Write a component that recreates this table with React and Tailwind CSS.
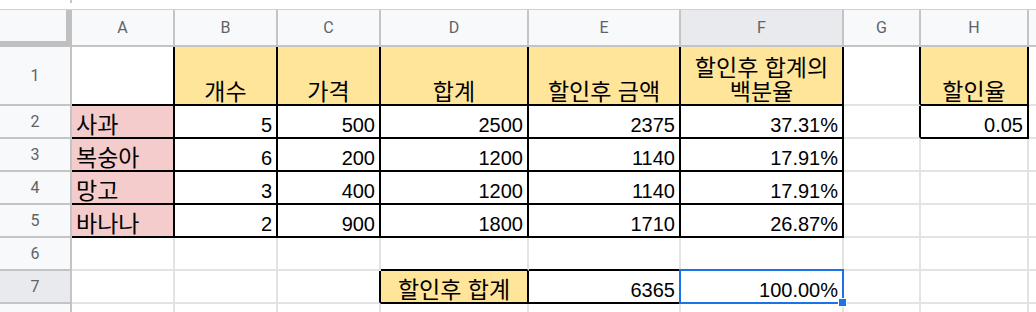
import React from 'react';
import clsx from 'clsx';

const Y = 'bg-[#ffe599]';
const P = 'bg-[#f4cccc]';

const LETTERS = ['A', 'B', 'C', 'D', 'E', 'F', 'G', 'H', ''];

// Hangul renders a touch larger than the digits in the sheet
const K = ({ children }) => <span className="text-[23px] leading-[23px]">{children}</span>;

// one entry per cell A..I; r / b = black right / bottom edge
const ROWS = [
  [
    { r: 1, b: 1 },
    { t: <K>개수</K>, a: 'c', bg: Y, r: 1, b: 1 },
    { t: <K>가격</K>, a: 'c', bg: Y, r: 1, b: 1 },
    { t: <K>합계</K>, a: 'c', bg: Y, r: 1, b: 1 },
    { t: <K>할인후 금액</K>, a: 'c', bg: Y, r: 1, b: 1 },
    { t: (<div className="text-center text-[23px] leading-[24px]">할인후 합계의<br />백분율</div>), a: 'c', bg: Y, r: 1, b: 1 },
    { r: 1 },
    { t: <K>할인율</K>, a: 'c', bg: Y, r: 1, b: 1 },
    {},
  ],
  [
    { t: <K>사과</K>, a: 'l', bg: P, r: 1, b: 1 },
    { t: '5', a: 'r', r: 1, b: 1 },
    { t: '500', a: 'r', r: 1, b: 1 },
    { t: '2500', a: 'r', r: 1, b: 1 },
    { t: '2375', a: 'r', r: 1, b: 1 },
    { t: '37.31%', a: 'r', r: 1, b: 1 },
    { r: 1 },
    { t: '0.05', a: 'r', r: 1, b: 1 },
    {},
  ],
  [
    { t: <K>복숭아</K>, a: 'l', bg: P, r: 1, b: 1 },
    { t: '6', a: 'r', r: 1, b: 1 },
    { t: '200', a: 'r', r: 1, b: 1 },
    { t: '1200', a: 'r', r: 1, b: 1 },
    { t: '1140', a: 'r', r: 1, b: 1 },
    { t: '17.91%', a: 'r', r: 1, b: 1 },
    {},
    {},
    {},
  ],
  [
    { t: <K>망고</K>, a: 'l', bg: P, r: 1, b: 1 },
    { t: '3', a: 'r', r: 1, b: 1 },
    { t: '400', a: 'r', r: 1, b: 1 },
    { t: '1200', a: 'r', r: 1, b: 1 },
    { t: '1140', a: 'r', r: 1, b: 1 },
    { t: '17.91%', a: 'r', r: 1, b: 1 },
    {},
    {},
    {},
  ],
  [
    { t: <K>바나나</K>, a: 'l', bg: P, r: 1, b: 1 },
    { t: '2', a: 'r', r: 1, b: 1 },
    { t: '900', a: 'r', r: 1, b: 1 },
    { t: '1800', a: 'r', r: 1, b: 1 },
    { t: '1710', a: 'r', r: 1, b: 1 },
    { t: '26.87%', a: 'r', r: 1, b: 1 },
    {},
    {},
    {},
  ],
  [{}, {}, {}, { b: 1 }, { b: 1 }, { b: 1 }, {}, {}, {}],
  [
    {},
    {},
    { r: 1 },
    { t: <K>할인후 합계</K>, a: 'c', bg: Y, r: 1, b: 1 },
    { t: '6365', a: 'r', r: 1, b: 1 },
    { t: '100.00%', a: 'r', r: 1, b: 1, sel: 1 },
    {},
    {},
    {},
  ],
  [{}, {}, {}, {}, {}, {}, {}, {}, {}],
];

function Cell({ t, a, bg, r, b, sel }) {
  return (
    <div
      className={clsx(
        'relative flex items-end border-r-2 border-b-2 whitespace-nowrap text-[20px] leading-[23px] text-black',
        a === 'r' && 'justify-end pr-[4px]',
        a === 'l' && 'justify-start pl-[4px]',
        a === 'c' && 'justify-center',
        bg || 'bg-white',
        r ? 'border-r-black' : 'border-r-[#e2e3e3]',
        b ? 'border-b-black' : 'border-b-[#e2e3e3]'
      )}
    >
      {t}
      {sel ? (
        <>
          <div className="absolute -left-[2px] -top-[2px] -right-[2px] -bottom-[2px] z-10 border-2 border-[#1a73e8]" />
          <div className="absolute -right-[5px] -bottom-[5px] z-20 w-[9px] h-[9px] bg-[#1a73e8] border border-white" />
        </>
      ) : null}
    </div>
  );
}

export default function App() {
  return (
    <div
      className="w-[1036px] h-[312px] overflow-hidden bg-white"
      style={{ fontFamily: '"Liberation Sans", "Noto Sans CJK KR", Arial, sans-serif' }}
    >
      {/* remains of the formula bar */}
      <div className="h-[10px] border-b border-[#d0d0d0] flex">
        <div className="w-[70px] h-[3px]" />
        <div className="w-[2px] h-[3px] bg-[#c8c8c8]" />
      </div>

      <div className="grid grid-cols-[72px_103px_103px_103px_148px_152px_163px_77px_108px_100px] grid-rows-[37px_59px_33px_33px_33px_33px_33px_33px_33px]">
        {/* column headers */}
        <div className="bg-[#f8f9fa] border-r-[6px] border-b-[6px] border-[#c0c0c0]" />
        {LETTERS.map((l, j) => (
          <div
            key={j}
            className={clsx(
              'flex items-center justify-center border-r-2 border-b-2 border-[#c4c4c4] text-[16px] text-[#5f6368] font-["Roboto"]',
              l === 'F' ? 'bg-[#e8eaed]' : 'bg-[#f8f9fa]'
            )}
          >
            {l}
          </div>
        ))}

        {ROWS.map((row, i) => (
          <React.Fragment key={i}>
            <div
              className={clsx(
                'flex items-center justify-center border-r-2 border-b-2 border-[#c4c4c4] text-[16px] text-[#5f6368] font-["Roboto"]',
                i === 6 ? 'bg-[#e8eaed]' : 'bg-[#f8f9fa]'
              )}
            >
              {i < 7 ? i + 1 : ''}
            </div>
            {row.map((c, j) => (
              <Cell key={j} {...c} />
            ))}
          </React.Fragment>
        ))}
      </div>
    </div>
  );
}
